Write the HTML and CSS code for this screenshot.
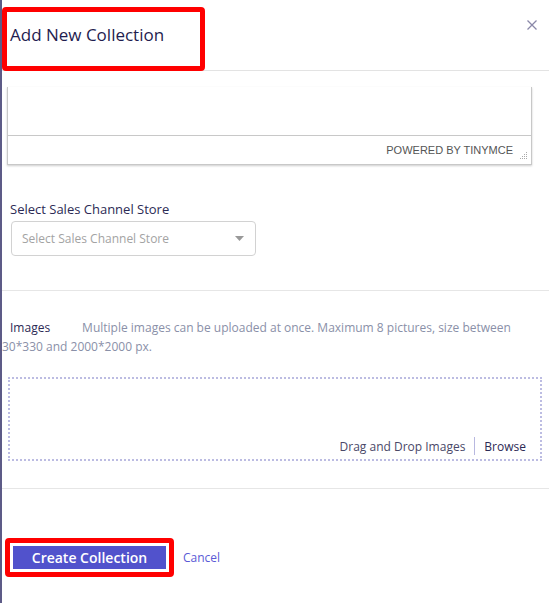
FILE: index.html
```html
<!DOCTYPE html>
<html lang="en">
<head>
    <meta charset="UTF-8">
    <meta name="viewport" content="width=device-width, initial-scale=1.0">
    <title>Add New Collection</title>
    <link rel="stylesheet" href="styles.css">
</head>
<body>
<div class="modal">
    <div class="modal-header">
        <div class="highlight title-box">
            <h2 class="modal-title">Add New Collection</h2>
        </div>
        <button class="close-btn" aria-label="Close">
            <svg width="10" height="10" viewBox="0 0 10 10"><path d="M0.5 0.5 L9.5 9.5 M9.5 0.5 L0.5 9.5" stroke="#8a88a8" stroke-width="1.3" fill="none"/></svg>
        </button>
    </div>

    <div class="editor">
        <div class="editor-area"></div>
        <div class="editor-status">
            <span class="powered">POWERED BY TINYMCE</span>
            <svg class="resize" width="9" height="7" viewBox="0 0 9 7">
                <rect x="7" y="0" width="1" height="1" fill="#aaa"/>
                <rect x="5" y="2" width="1" height="1" fill="#aaa"/>
                <rect x="7" y="2" width="1" height="1" fill="#aaa"/>
                <rect x="3" y="4" width="1" height="1" fill="#aaa"/>
                <rect x="5" y="4" width="1" height="1" fill="#aaa"/>
                <rect x="7" y="4" width="1" height="1" fill="#aaa"/>
                <rect x="1" y="6" width="1" height="1" fill="#aaa"/>
                <rect x="3" y="6" width="1" height="1" fill="#aaa"/>
                <rect x="5" y="6" width="1" height="1" fill="#aaa"/>
                <rect x="7" y="6" width="1" height="1" fill="#aaa"/>
            </svg>
        </div>
    </div>

    <div class="field">
        <label class="field-label">Select Sales Channel Store</label>
        <div class="select">
            <span class="placeholder">Select Sales Channel Store</span>
            <svg width="9" height="5" viewBox="0 0 9 5"><path d="M0 0 L9 0 L4.5 5 Z" fill="#999"/></svg>
        </div>
    </div>

    <hr class="divider">

    <div class="images">
        <p class="images-info"><span class="images-label">Images</span><span class="images-desc">Multiple images can be uploaded at once. Maximum 8 pictures, size between<br>30*330 and 2000*2000 px.</span></p>
        <div class="dropzone">
            <span class="drop-text">Drag and Drop Images</span>
            <span class="drop-sep"></span>
            <span class="browse">Browse</span>
        </div>
    </div>

    <hr class="divider divider-bottom">

    <div class="actions">
        <div class="highlight btn-box">
            <button class="btn-primary">Create Collection</button>
        </div>
        <a class="cancel" href="#">Cancel</a>
    </div>
</div>
</body>
</html>
```

FILE: styles.css
```css
body {
    margin: 0;
    font-family: "Open Sans", "Noto Sans", sans-serif;
    background: #fff;
}
.modal {
    border-left: 2px solid #5d5b87;
    min-height: 603px;
    box-sizing: border-box;
}
.modal-header {
    height: 70px;
    border-bottom: 1px solid #e3e3e3;
    display: flex;
    justify-content: space-between;
    align-items: flex-start;
}
.highlight {
    border: 5px solid #ff0000;
    border-radius: 4px;
    box-sizing: border-box;
}
.title-box {
    margin-top: 7px;
    width: 203px;
    height: 64px;
    padding-left: 3px;
    display: flex;
    align-items: center;
}
.modal-title {
    margin: 0;
    font-size: 17px;
    font-weight: 400;
    color: #1f1d4f;
    position: relative;
    top: -5px;
}
.close-btn {
    border: none;
    background: none;
    padding: 0;
    margin: 20px 12px 0 0;
    width: 10px;
    height: 10px;
    display: flex;
}

/* tinymce box, scrolled so its top is hidden */
.editor {
    margin: 16px 17px 0 5px;
    border: 1px solid #c8c8c8;
    border-top: none;
    box-shadow: 0 1px 2px rgba(0, 0, 0, 0.2);
}
.editor-area {
    height: 48px;
    border-bottom: 1px solid #c8c8c8;
}
.editor-status {
    height: 28px;
    display: flex;
    justify-content: flex-end;
    align-items: center;
    padding-right: 3px;
}
.powered {
    font-family: "Liberation Sans", Arial, sans-serif;
    font-size: 11px;
    color: #555;
    margin-right: 6px;
}
.resize {
    align-self: flex-end;
    margin-bottom: 5px;
}

.field {
    margin-top: 35px;
    padding-left: 8px;
}
.field-label {
    display: block;
    font-size: 13px;
    line-height: 18px;
    color: #2c2a55;
}
.select {
    margin: 3px 0 0 1px;
    width: 245px;
    height: 35px;
    box-sizing: border-box;
    border: 1px solid #d2d2d2;
    border-radius: 4px;
    display: flex;
    justify-content: space-between;
    align-items: center;
    padding: 0 11px 0 10px;
}
.placeholder {
    font-size: 12px;
    color: #a3a3a3;
}

.divider {
    margin: 34px 0 0;
    border: none;
    border-top: 1px solid #e6e6e6;
}
.divider-bottom {
    margin-top: 27px;
}

.images-info {
    margin: 27px 0 0;
    font-size: 12px;
    line-height: 19px;
    color: #8a90a8;
    text-indent: 8px;
}
.images-label {
    color: #2c2a55;
    margin-right: 32px;
}
.dropzone {
    margin: 21px 7px 0 6px;
    height: 84px;
    box-sizing: border-box;
    border: 2px dotted #bcbce2;
    display: flex;
    justify-content: flex-end;
    align-items: flex-end;
    padding: 0 14px 4px 0;
    font-size: 12px;
}
.drop-text {
    color: #4a4868;
}
.drop-sep {
    width: 1px;
    height: 18px;
    background: #b8b8e0;
    margin: 0 9px 0 9px;
}
.browse {
    color: #2c2a55;
}

.actions {
    margin-top: 49px;
    display: flex;
    align-items: center;
    padding-left: 3px;
}
.btn-box {
    width: 169px;
    height: 39px;
    padding: 3px;
    display: flex;
}
.btn-primary {
    flex: 1;
    border: none;
    background: #5152cc;
    color: #fff;
    font-family: "Open Sans", "Noto Sans", sans-serif;
    font-size: 14px;
    font-weight: 600;
    padding: 0;
}
.cancel {
    margin-left: 9px;
    font-size: 12px;
    color: #5a5ad6;
    text-decoration: none;
}
```
